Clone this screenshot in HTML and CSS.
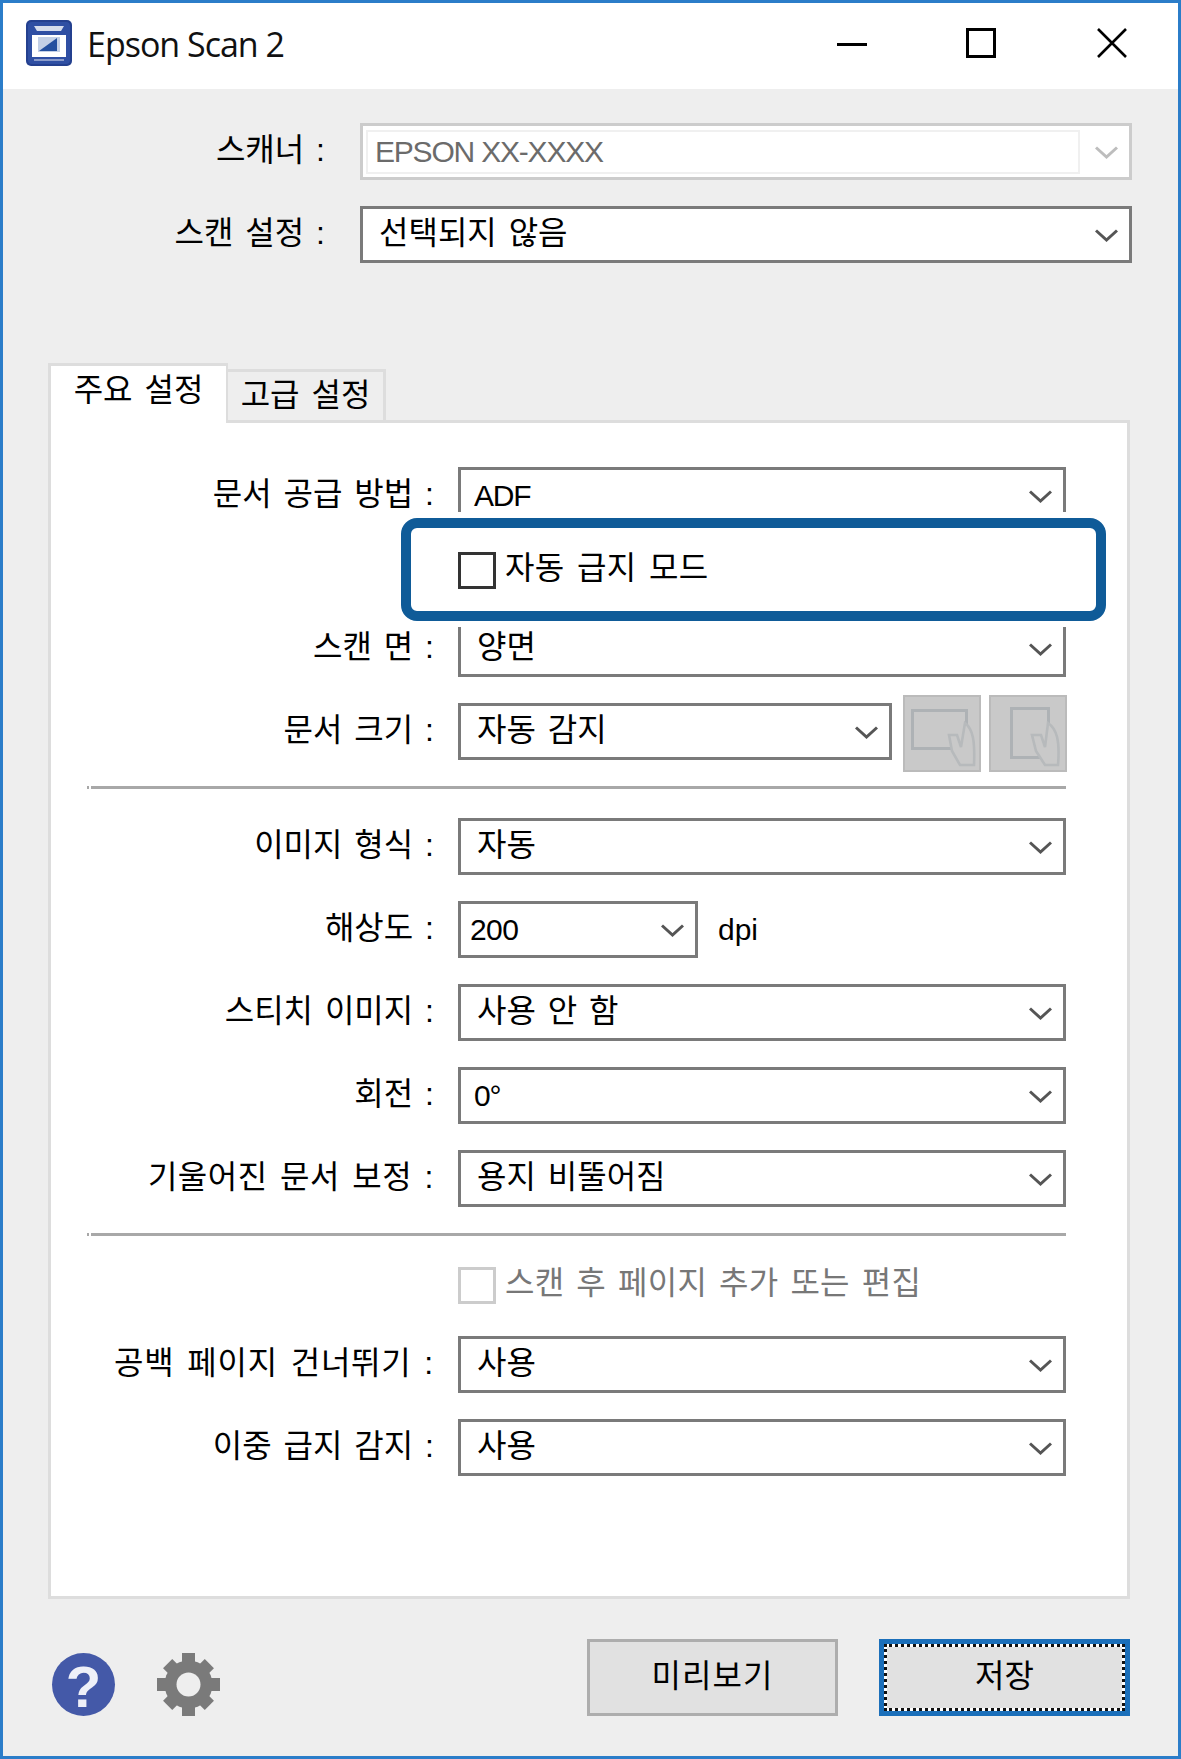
FILE: index.html
```html
<!DOCTYPE html>
<html lang="ko">
<head>
<meta charset="utf-8">
<title>Epson Scan 2</title>
<link rel="stylesheet" href="styles.css">
</head>
<body>
<svg class="defs" width="0" height="0" aria-hidden="true">
  <defs>
    <symbol id="chev" viewBox="0 0 23 13"><path d="M1 1.5 L11.5 11 L22 1.5" fill="none" stroke="currentColor" stroke-width="3"/></symbol>
  </defs>
</svg>
<div class="window">
  <header class="titlebar">
    <svg class="app-icon" viewBox="0 0 46 46">
      <rect x="0" y="0" width="46" height="46" rx="5" fill="#24408f"/>
      <rect x="2" y="2" width="42" height="42" rx="4" fill="#2f4fa3"/>
      <path d="M8 6 H38 L35 11 H11 Z" fill="#d5dcec"/>
      <path d="M6 15 H40 V37 H6 Z" fill="#fff"/>
      <rect x="12" y="17" width="22" height="15" fill="#c3d0e6"/>
      <path d="M13 31 L31 18 V31 Z" fill="#24509f"/>
      <rect x="8" y="39" width="30" height="2" fill="#8b9ccb"/>
    </svg>
    <div class="app-title">Epson Scan 2</div>
    <div class="controls">
      <span class="ctl-min"></span>
      <span class="ctl-max"></span>
      <svg class="ctl-close" viewBox="0 0 30 30"><path d="M1 1 L29 29 M29 1 L1 29" stroke="#000" stroke-width="2.6" fill="none"/></svg>
    </div>
  </header>

  <main class="body">
    <section class="top-form">
      <div class="row top-row">
        <div class="label top-label">스캐너 :</div>
        <div class="combo combo-disabled">
          <div class="combo-field">EPSON XX-XXXX</div>
          <svg class="chev"><use href="#chev"/></svg>
        </div>
      </div>
      <div class="row top-row">
        <div class="label top-label">스캔 설정 :</div>
        <div class="combo"><span class="combo-text">선택되지 않음</span><svg class="chev"><use href="#chev"/></svg></div>
      </div>
    </section>

    <div class="tabs">
      <div class="tab tab-active">주요 설정</div>
      <div class="tab tab-idle">고급 설정</div>
    </div>

    <section class="pane">
      <div class="row">
        <div class="label">문서 공급 방법 :</div>
        <div class="combo"><span class="combo-text combo-latin">ADF</span><svg class="chev"><use href="#chev"/></svg></div>
      </div>
      <div class="check-row">
        <span class="checkbox"></span><span class="check-text">자동 급지 모드</span>
      </div>
      <div class="row">
        <div class="label">스캔 면 :</div>
        <div class="combo"><span class="combo-text">양면</span><svg class="chev"><use href="#chev"/></svg></div>
      </div>
      <div class="row">
        <div class="label">문서 크기 :</div>
        <div class="combo combo-size"><span class="combo-text">자동 감지</span><svg class="chev"><use href="#chev"/></svg></div>
        <div class="hand-btn hand-first">
          <svg viewBox="0 0 74 73"><rect x="7.5" y="13.5" width="54" height="38" fill="none" stroke="#aeb2b5" stroke-width="3"/><path d="M44 38 H52 L56 50 L60 26 C68 32 70 44 69 68 H55 L47 54 Z" fill="#c9c9c9" stroke="#b7babc" stroke-width="2.6"/></svg>
        </div>
        <div class="hand-btn">
          <svg viewBox="0 0 74 73"><rect x="20.5" y="11.5" width="37" height="49" fill="none" stroke="#aeb2b5" stroke-width="3"/><path d="M41 38 H50 L54 50 L57 26 C66 32 69 44 67 68 H54 L45 54 Z" fill="#c9c9c9" stroke="#b7babc" stroke-width="2.6"/></svg>
        </div>
      </div>
      <div class="sep"></div>
      <div class="row">
        <div class="label">이미지 형식 :</div>
        <div class="combo"><span class="combo-text">자동</span><svg class="chev"><use href="#chev"/></svg></div>
      </div>
      <div class="row">
        <div class="label">해상도 :</div>
        <div class="combo combo-res"><span class="combo-text combo-latin combo-num">200</span><svg class="chev"><use href="#chev"/></svg></div>
        <span class="unit">dpi</span>
      </div>
      <div class="row">
        <div class="label">스티치 이미지 :</div>
        <div class="combo"><span class="combo-text">사용 안 함</span><svg class="chev"><use href="#chev"/></svg></div>
      </div>
      <div class="row">
        <div class="label">회전 :</div>
        <div class="combo"><span class="combo-text combo-latin">0°</span><svg class="chev"><use href="#chev"/></svg></div>
      </div>
      <div class="row">
        <div class="label label-mid">기울어진 문서 보정 :</div>
        <div class="combo"><span class="combo-text">용지 비뚤어짐</span><svg class="chev"><use href="#chev"/></svg></div>
      </div>
      <div class="sep"></div>
      <div class="check-row check-row-off">
        <span class="checkbox checkbox-off"></span><span class="check-text check-text-off">스캔 후 페이지 추가 또는 편집</span>
      </div>
      <div class="row">
        <div class="label label-wide">공백 페이지 건너뛰기 :</div>
        <div class="combo"><span class="combo-text">사용</span><svg class="chev"><use href="#chev"/></svg></div>
      </div>
      <div class="row">
        <div class="label">이중 급지 감지 :</div>
        <div class="combo"><span class="combo-text">사용</span><svg class="chev"><use href="#chev"/></svg></div>
      </div>
      <div class="highlight"></div>
    </section>

    <footer class="footer">
      <div class="help-icon">?</div>
      <svg class="gear-icon" viewBox="0 0 63 63">
        <g fill="#7a7a7a">
          <circle cx="31.5" cy="31.5" r="24"/>
          <rect x="25" y="0" width="13" height="63"/>
          <rect x="0" y="25" width="63" height="13"/>
          <rect x="25" y="2" width="13" height="59" transform="rotate(45 31.5 31.5)"/>
          <rect x="25" y="2" width="13" height="59" transform="rotate(-45 31.5 31.5)"/>
        </g>
        <circle cx="31.5" cy="31.5" r="12" fill="#eee"/>
      </svg>
      <div class="actions">
        <button class="btn" type="button">미리보기</button>
        <button class="btn btn-default" type="button"><span class="btn-focus">저장</span></button>
      </div>
    </footer>
  </main>
</div>
</body>
</html>
```
FILE: styles.css
```css
* { box-sizing: border-box; }
html, body { margin: 0; padding: 0; }
body {
  width: 1181px;
  height: 1759px;
  overflow: hidden;
  font-family: "Liberation Sans", "Noto Sans CJK KR", sans-serif;
  font-size: 32px;
  color: #000;
  background: #eee;
}
.defs { position: absolute; }
.window {
  width: 1181px;
  height: 1759px;
  border: 3px solid #2b7dc9;
  display: flex;
  flex-direction: column;
  background: #eee;
}

/* title bar */
.titlebar {
  height: 86px;
  background: #fff;
  display: flex;
  align-items: flex-start;
  flex: none;
}
.app-icon { width: 46px; height: 46px; margin: 17px 0 0 23px; flex: none; }
.app-title {
  margin: 19px 0 0 15px;
  font-family: "Open Sans", sans-serif;
  font-size: 34px;
  line-height: 44px;
  letter-spacing: -1px;
  color: #111;
}
.controls { margin: 25px 51px 0 auto; display: flex; align-items: flex-start; }
.ctl-min { display: block; width: 30px; height: 3px; background: #000; margin-top: 15px; }
.ctl-max { display: block; width: 30px; height: 30px; border: 3px solid #000; margin-left: 99px; }
.ctl-close { display: block; width: 30px; height: 30px; margin-left: 101px; }

/* body */
.body { flex: 1; padding: 34px 48px 0 45px; display: flex; flex-direction: column; min-height: 0; }
.top-form { margin-right: -2px; display: flex; flex-direction: column; }
.row { display: flex; align-items: center; height: 57px; margin-bottom: 26px; flex: none; }
.label {
  width: 347px;
  margin-right: 24px;
  padding-bottom: 9px;
  text-align: right;
  white-space: nowrap;
  flex: none;
  word-spacing: 3px;
}
.label-mid { letter-spacing: 0.5px; }
.label-wide { letter-spacing: 0.8px; }
.top-label { width: 277px; margin-right: 35px; }
.combo {
  flex: 1;
  height: 57px;
  border: 3px solid #7a7a7a;
  background: #fff;
  display: flex;
  align-items: center;
  color: #000;
  padding-left: 16px;
}
.combo-text { flex: 1; white-space: nowrap; word-spacing: 3px; padding-bottom: 9px; }
.combo-latin { padding-bottom: 0; margin-left: -3px; font-size: 30px; letter-spacing: -1.2px; }
.combo-num { margin-left: -7px; letter-spacing: -0.6px; }
.chev { width: 23px; height: 13px; margin-right: 11px; color: #555; flex: none; margin-top: 2px; }
.combo-disabled { border-color: #ccc; padding-left: 3px; }
.combo-disabled .chev { color: #bdbdbd; }
.combo-field {
  flex: 1;
  height: 44px;
  border: 2px solid #f0f0f0;
  margin-right: 15px;
  padding-left: 7px;
  display: flex;
  align-items: center;
  color: #6b6b6b;
  font-size: 30px;
  letter-spacing: -1.2px;
}
.combo-size { flex: none; width: 434px; }
.combo-res { flex: none; width: 240px; }
.unit { margin-left: 20px; font-size: 30px; }

/* tabs */
.tabs {
  margin-top: 74px;
  margin-bottom: -3px;
  display: flex;
  align-items: flex-end;
  height: 60px;
  position: relative;
  z-index: 1;
}
.tab {
  border: 3px solid #ddd;
  word-spacing: 3px;
  display: flex;
  align-items: center;
  justify-content: center;
}
.tab-active { width: 180px; height: 60px; background: #fff; border-bottom: none; border-right-width: 2px; padding-bottom: 16px; }
.tab-idle { width: 158px; height: 54px; border-left: none; padding-bottom: 8px; }

/* main pane */
.pane {
  position: relative;
  height: 1179px;
  background: #fff;
  border: 3px solid #ddd;
  padding: 44px 61px 0 36px;
  flex: none;
}
.check-row { display: flex; align-items: flex-start; height: 44px; margin-bottom: 26px; padding-left: 371px; }
.check-row-off { height: 45px; }
.checkbox { width: 38px; height: 37px; border: 3px solid #333; margin-top: 2px; flex: none; background: #fff; }
.checkbox-off { border-color: #ccc; }
.check-text { margin-left: 9px; margin-top: -2px; line-height: 40px; white-space: nowrap; word-spacing: 3px; letter-spacing: 0.4px; }
.check-text-off { color: #777; letter-spacing: 0.2px; }
.sep {
  height: 3px;
  background: linear-gradient(to right, #a8a8a8 2px, #fff 2px, #fff 4px, #a8a8a8 4px);
  margin: 0 0 29px;
}
.hand-btn {
  width: 78px;
  height: 77px;
  background: #c9c9c9;
  border: 2px solid #bbb;
  flex: none;
  margin-left: 11px;
  margin-top: 4px;
}
.hand-first + .hand-btn { margin-left: 8px; }
.hand-btn svg { display: block; width: 74px; height: 73px; }
.highlight {
  position: absolute;
  left: 350px;
  top: 95px;
  width: 705px;
  height: 103px;
  border: 10px solid #0f5b98;
  border-radius: 16px;
  box-shadow: 0 0 0 6px #fff;
  pointer-events: none;
}

/* footer */
.footer { margin-top: 40px; display: flex; align-items: flex-end; padding-left: 4px; }
.help-icon {
  width: 63px;
  height: 63px;
  flex: none;
  padding-top: 4px;
  border-radius: 50%;
  background: #4459a8;
  color: #eef0f8;
  font-weight: 700;
  font-size: 58px;
  line-height: 59px;
  text-align: center;
}
.gear-icon { width: 63px; height: 63px; flex: none; margin-left: 42px; }
.actions { margin-left: auto; display: flex; gap: 41px; }
.btn {
  width: 251px;
  height: 77px;
  border: 3px solid #adadad;
  background: #e1e1e1;
  font: inherit;
  color: #000;
  padding: 0 0 9px;
  border-radius: 0;
  letter-spacing: 1px;
}
.btn-default { border: 5px solid #1b6fba; display: flex; padding: 0; letter-spacing: 0; }
.btn-focus {
  flex: 1;
  height: 100%;
  border: 3px dotted #111;
  background: linear-gradient(#e1e1e1, #e1e1e1) padding-box, #fff border-box;
  padding-bottom: 9px;
  display: flex;
  align-items: center;
  justify-content: center;
}
```
